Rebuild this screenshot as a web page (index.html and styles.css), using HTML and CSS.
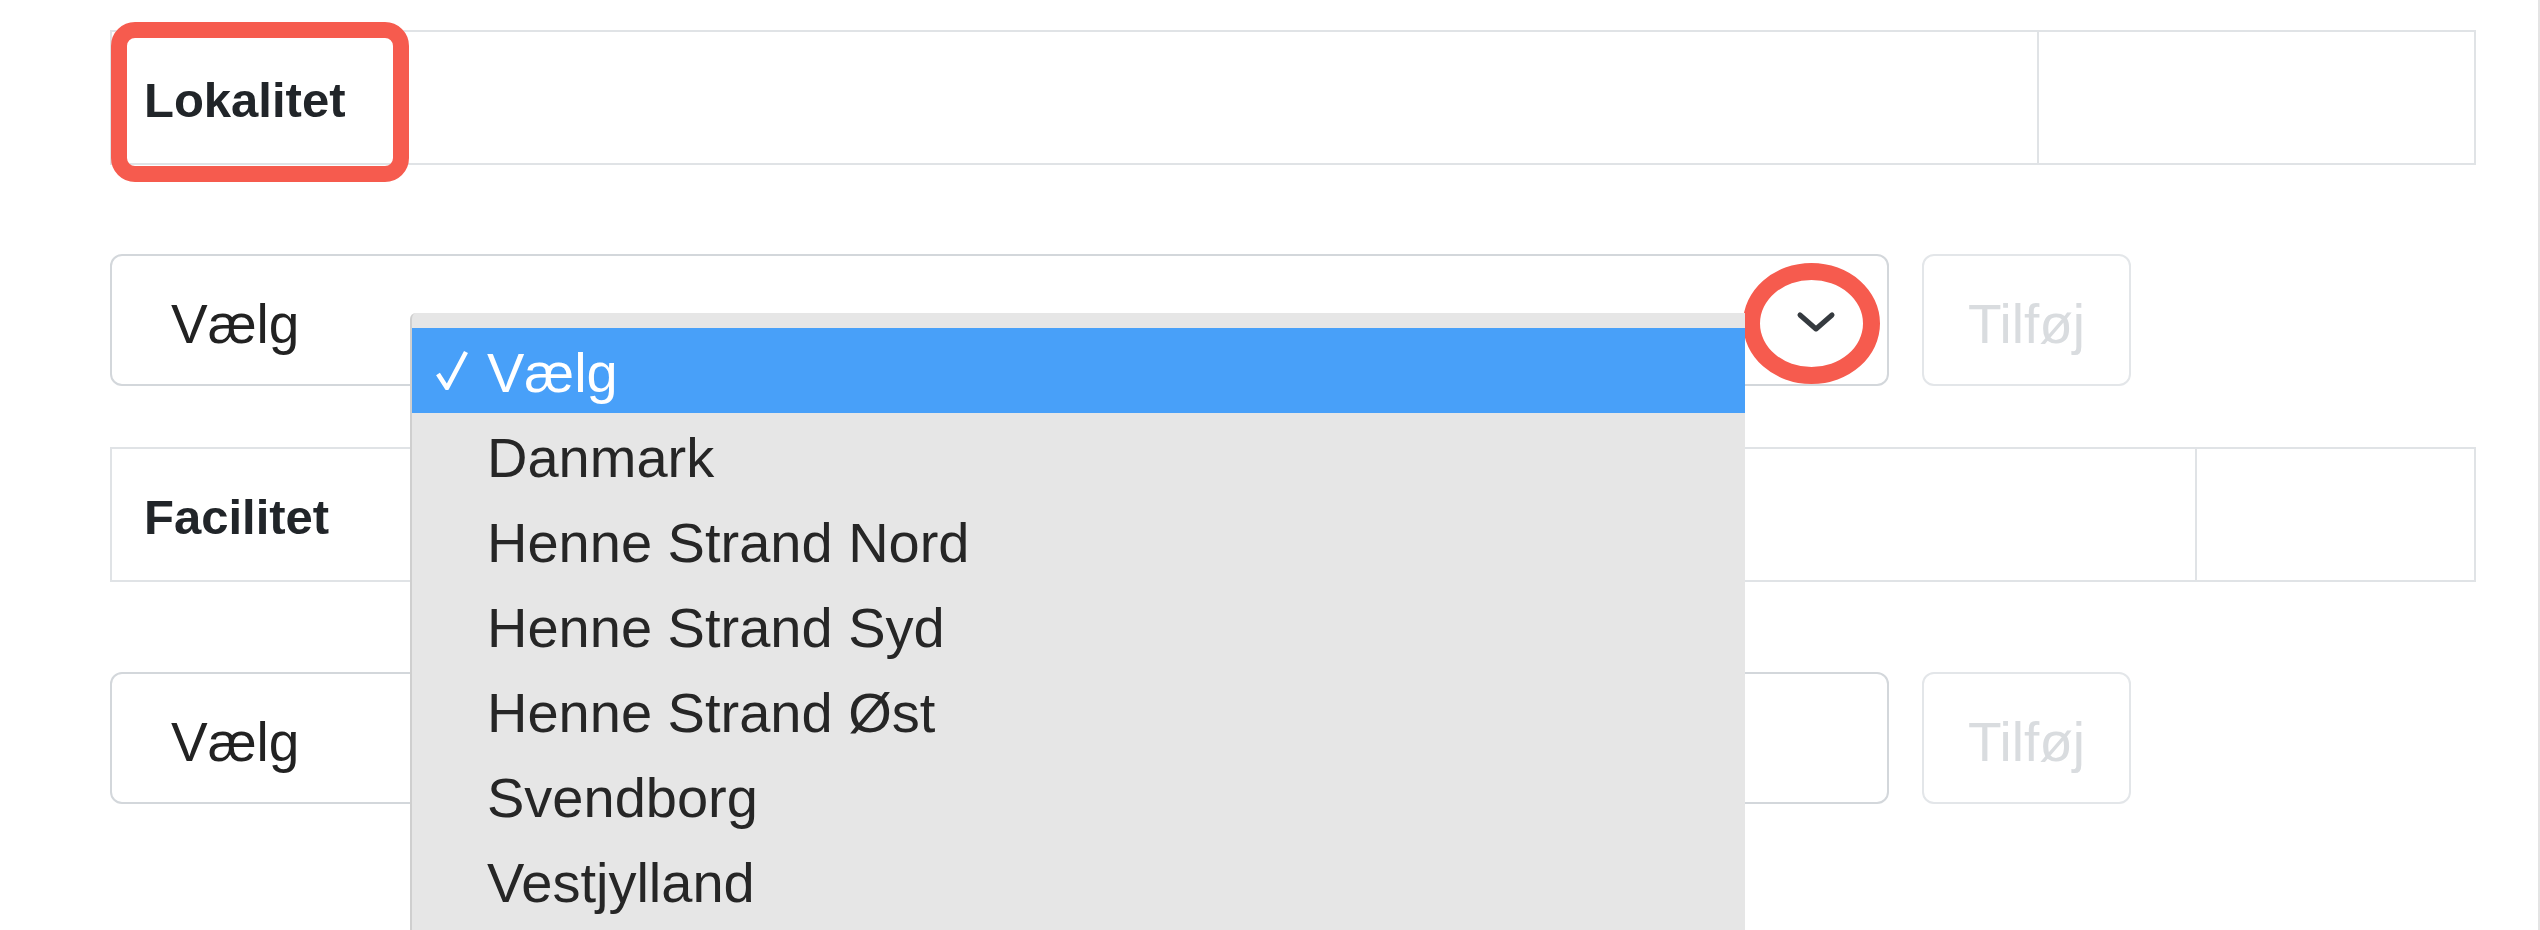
FILE: index.html
```html
<!DOCTYPE html>
<html lang="da">
<head>
<meta charset="utf-8">
<title>Lokalitet</title>
<link rel="stylesheet" href="styles.css">
</head>
<body>
<div class="page">
  <section class="group">
    <div class="table">
      <div class="cell cell-label">
        <span class="label">Lokalitet</span>
        <span class="mark-box"></span>
      </div>
      <div class="cell cell-end cell-end-wide"></div>
    </div>
    <div class="form-row">
      <div class="select">
        <span class="select-value">Vælg</span>
        <svg class="chevron" width="40" height="24" viewBox="0 0 40 24"><path d="M4 5 L20 19 L36 5" fill="none" stroke="#353a3f" stroke-width="5" stroke-linecap="round" stroke-linejoin="round"/></svg>
        <span class="mark-ring"></span>
        <ul class="dropdown">
          <li class="option selected"><svg class="check" width="32" height="40" viewBox="0 0 32 40"><path d="M2 24 L11 38 L30 2" fill="none" stroke="#fff" stroke-width="4.5" stroke-linejoin="round"/></svg>Vælg</li>
          <li class="option">Danmark</li>
          <li class="option">Henne Strand Nord</li>
          <li class="option">Henne Strand Syd</li>
          <li class="option">Henne Strand Øst</li>
          <li class="option">Svendborg</li>
          <li class="option">Vestjylland</li>
        </ul>
      </div>
      <button class="btn" type="button">Tilføj</button>
    </div>
  </section>
  <section class="group group-second">
    <div class="table">
      <div class="cell cell-label">
        <span class="label">Facilitet</span>
      </div>
      <div class="cell cell-end cell-end-narrow"></div>
    </div>
    <div class="form-row form-row-last">
      <div class="select">
        <span class="select-value">Vælg</span>
      </div>
      <button class="btn" type="button">Tilføj</button>
    </div>
  </section>
</div>
</body>
</html>
```
FILE: styles.css
```css
html, body {
  margin: 0;
  padding: 0;
  height: 930px;
  overflow: hidden;
  background: #ffffff;
}
body {
  font-family: "Liberation Sans", Arial, Helvetica, sans-serif;
  color: #212529;
}
.page {
  box-sizing: border-box;
  height: 930px;
  padding: 30px 62px 0 110px;
  border-right: 2px solid #e4e4e4;
}
.group-second {
  margin-top: 61px;
}
.table {
  display: flex;
  height: 135px;
  box-sizing: border-box;
  border: 2px solid #e0e3e6;
}
.cell {
  box-sizing: border-box;
  height: 100%;
  display: flex;
  align-items: center;
}
.cell-label {
  position: relative;
  flex: 1;
  padding: 5px 0 0 32px;
}
.label {
  font-weight: bold;
  font-size: 49px;
  line-height: 1;
}
.cell-end {
  border-left: 2px solid #e0e3e6;
}
.cell-end-wide {
  width: 437px;
}
.cell-end-narrow {
  width: 279px;
}
.mark-box {
  position: absolute;
  left: -1px;
  top: -10px;
  width: 298px;
  height: 160px;
  box-sizing: border-box;
  border: 16px solid #f65b4e;
  border-radius: 24px;
}
.form-row {
  display: flex;
  margin-top: 89px;
}
.form-row-last {
  margin-top: 90px;
}
.select {
  position: relative;
  box-sizing: border-box;
  width: 1779px;
  height: 132px;
  border: 2px solid #d3d7db;
  border-radius: 12px;
  display: flex;
  align-items: center;
  padding-left: 59px;
  background: #fff;
}
.select-value {
  font-size: 55px;
  padding-top: 8px;
  color: #222;
}
.chevron {
  margin-left: auto;
  margin-right: 51px;
  margin-top: 4px;
  display: block;
}
.mark-ring {
  position: absolute;
  left: 1631px;
  top: 7px;
  width: 137px;
  height: 121px;
  box-sizing: border-box;
  border: 17px solid #f65b4e;
  border-radius: 50%;
}
.btn {
  box-sizing: border-box;
  margin-left: 33px;
  width: 209px;
  height: 132px;
  border: 2px solid #e3e6e9;
  border-radius: 12px;
  background: #fff;
  font-family: "Liberation Sans", Arial, Helvetica, sans-serif;
  font-size: 55px;
  color: #d9dcdf;
  padding: 8px 0 0 0;
}
.dropdown {
  position: absolute;
  left: 298px;
  top: 57px;
  z-index: 5;
  width: 1335px;
  margin: 0;
  padding: 15px 0 60px 0;
  list-style: none;
  background: #e6e6e6;
  border-left: 2px solid #cfcfcf;
  border-top-left-radius: 6px;
  box-sizing: border-box;
}
.option {
  position: relative;
  height: 85px;
  box-sizing: border-box;
  padding: 4px 0 0 75px;
  line-height: 81px;
  font-size: 56px;
  color: #262626;
  white-space: nowrap;
}
.option.selected {
  background: #48a0f9;
  color: #ffffff;
}
.check {
  position: absolute;
  left: 24px;
  top: 22px;
}
```
